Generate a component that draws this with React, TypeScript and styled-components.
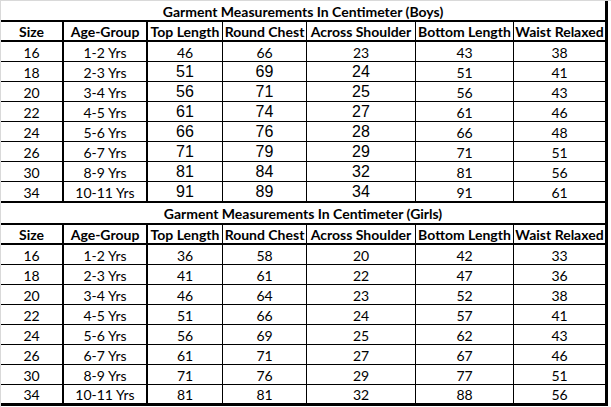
import React from 'react';
import styled, { createGlobalStyle } from 'styled-components';

const GlobalStyle = createGlobalStyle`
  html, body {
    margin: 0;
    padding: 0;
    background: #fff;
  }
`;

const COLS = [
  { w: 63, b: 2 },
  { w: 84, b: 2 },
  { w: 75, b: 1 },
  { w: 84, b: 1 },
  { w: 109, b: 1 },
  { w: 98, b: 1 },
  { w: 91, b: 0 },
];

const HEADERS = ['Size', 'Age-Group', 'Top Length', 'Round Chest', 'Across Shoulder', 'Bottom Length', 'Waist Relaxed'];

// rows: [size, age, top, chest, shoulder, bottom, waist], arial marks the cells pasted in another font
const BOYS = [
  ['16', '1-2 Yrs', '46', '66', '23', '43', '38'],
  ['18', '2-3 Yrs', '51', '69', '24', '51', '41'],
  ['20', '3-4 Yrs', '56', '71', '25', '56', '43'],
  ['22', '4-5 Yrs', '61', '74', '27', '61', '46'],
  ['24', '5-6 Yrs', '66', '76', '28', '66', '48'],
  ['26', '6-7 Yrs', '71', '79', '29', '71', '51'],
  ['30', '8-9 Yrs', '81', '84', '32', '81', '56'],
  ['34', '10-11 Yrs', '91', '89', '34', '91', '61'],
];

const GIRLS = [
  ['16', '1-2 Yrs', '36', '58', '20', '42', '33'],
  ['18', '2-3 Yrs', '41', '61', '22', '47', '36'],
  ['20', '3-4 Yrs', '46', '64', '23', '52', '38'],
  ['22', '4-5 Yrs', '51', '66', '24', '57', '41'],
  ['24', '5-6 Yrs', '56', '69', '25', '62', '43'],
  ['26', '6-7 Yrs', '61', '71', '27', '67', '46'],
  ['30', '8-9 Yrs', '71', '76', '29', '77', '51'],
  ['34', '10-11 Yrs', '81', '81', '32', '88', '56'],
];

const Page = styled.div`
  width: 611px;
  height: 407px;
  box-sizing: border-box;
  border-top: 1px solid #d9d9d9;
  border-left: 1px solid #d9d9d9;
  background: #fff;
`;

const Sheet = styled.div`
  width: 607px;
  box-sizing: border-box;
  border-right: 3px solid #000;
  border-bottom: 3px solid #000;
  font-family: Lato, 'Open Sans', sans-serif;
  font-size: 14px;
  color: #000;
`;

const TitleRow = styled.div<{ $h: number }>`
  height: ${(p) => p.$h}px;
  box-sizing: border-box;
  border-bottom: 2px solid #000;
  display: flex;
  align-items: center;
  justify-content: center;
  font-weight: bold;
  padding-top: 1px;
`;

const Row = styled.div<{ $h: number; $line: number }>`
  display: flex;
  height: ${(p) => p.$h}px;
  box-sizing: border-box;
  border-bottom: ${(p) => p.$line}px solid #000;
`;

const Cell = styled.div<{ $w: number; $b: number; $head?: boolean; $arial?: boolean }>`
  width: ${(p) => p.$w}px;
  flex: none;
  box-sizing: border-box;
  border-right: ${(p) => p.$b}px solid #000;
  display: flex;
  align-items: center;
  justify-content: center;
  padding-top: 1px;
  white-space: nowrap;
  font-weight: ${(p) => (p.$head ? 'bold' : 'normal')};
  ${(p) =>
    p.$arial &&
    `
    font-family: 'Liberation Sans', Arial, sans-serif;
    font-size: 16px;
  `}
`;

type SectionProps = {
  title: string;
  rows: string[][];
  arialRows?: boolean;
  titleH: number;
  last: boolean;
};

const Section: React.FC<SectionProps> = ({ title, rows, arialRows, titleH, last }) => (
  <>
    <TitleRow $h={titleH}>{title}</TitleRow>
    <Row $h={20} $line={2}>
      {HEADERS.map((h, i) => (
        <Cell key={h} $w={COLS[i].w} $b={COLS[i].b} $head>
          {h}
        </Cell>
      ))}
    </Row>
    {rows.map((r, ri) => {
      const isLast = ri === rows.length - 1;
      const line = isLast ? (last ? 0 : 2) : 1;
      const h = isLast ? (last ? 18 : 21) : 20;
      return (
        <Row key={r[0]} $h={h} $line={line}>
          {r.map((v, ci) => (
            <Cell
              key={ci}
              $w={COLS[ci].w}
              $b={COLS[ci].b}
              $arial={arialRows && ri > 0 && ci >= 2 && ci <= 4}
            >
              {v}
            </Cell>
          ))}
        </Row>
      );
    })}
  </>
);

const App: React.FC = () => (
  <Page>
    <GlobalStyle />
    <Sheet>
      <Section title="Garment Measurements In Centimeter (Boys)" rows={BOYS} arialRows titleH={21} last={false} />
      <Section title="Garment Measurements In Centimeter (Girls)" rows={GIRLS} titleH={22} last />
    </Sheet>
  </Page>
);

export default App;
